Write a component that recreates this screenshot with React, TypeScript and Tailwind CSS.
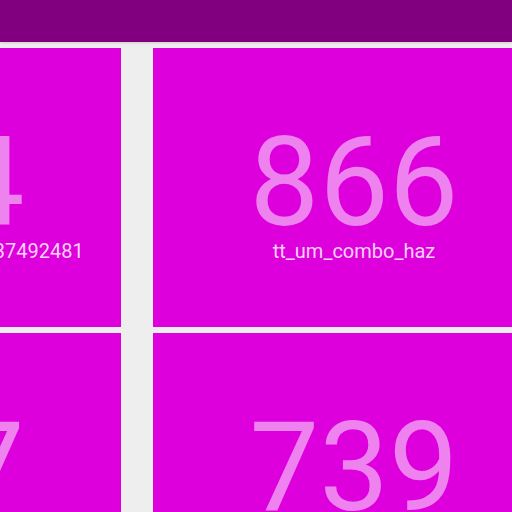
const cards = [
  { value: "954", label: "tt_um_wokwi_377153776437492481" },
  { value: "866", label: "tt_um_combo_haz" },
  { value: "777", label: "tt_um_wokwi_37715284910281" },
  { value: "739", label: "tt_um_example_design" },
];

export default function App() {
  return (
    <div
      className="h-[512px] w-[512px] overflow-hidden bg-[#eeeeee]"
      style={{ fontFamily: "Roboto, 'Noto Sans', sans-serif" }}
    >
      <header className="h-[42px] bg-[#800080] shadow-sm" />
      <div className="ml-[-281px] mt-[6px] grid w-[836px] grid-cols-[402px_402px] gap-x-[32px] gap-y-[6px]">
        {cards.map((c) => (
          <div
            key={c.value}
            className="flex h-[279px] flex-col items-center bg-[#dd00dd] pt-[80px] text-[#ee82ee]"
          >
            <div className="text-[124px] leading-[110px]">{c.value}</div>
            <div className="mt-[1px] text-[20px] leading-[24px] text-[#fbd2fb]">{c.label}</div>
          </div>
        ))}
      </div>
    </div>
  );
}
